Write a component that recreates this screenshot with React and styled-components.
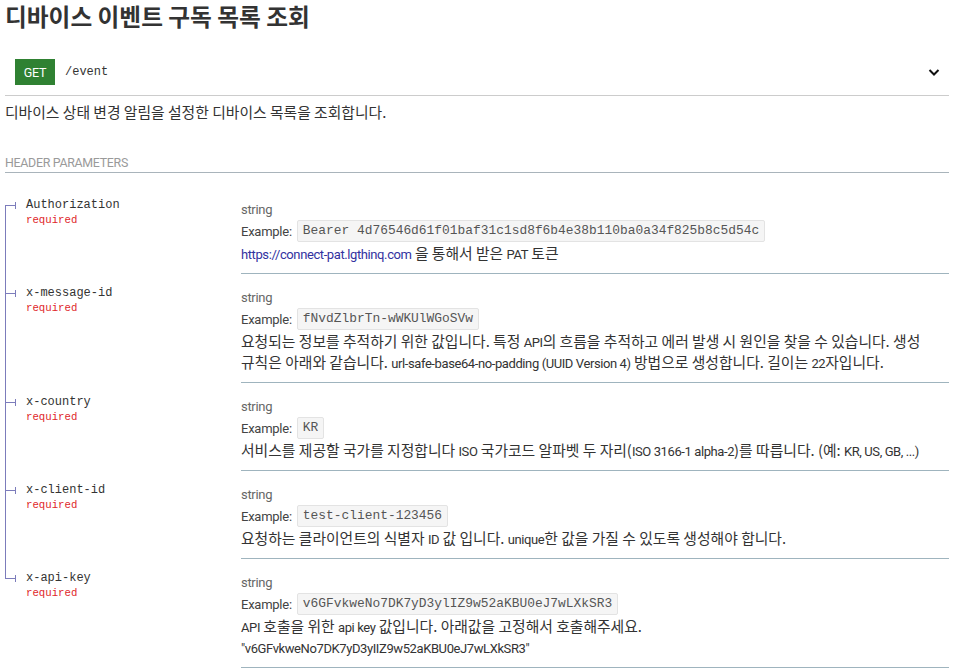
import React from "react";
import styled, { createGlobalStyle } from "styled-components";

const GlobalStyle = createGlobalStyle`
  html, body { margin: 0; padding: 0; background: #fff; }
  body {
    font-family: Roboto, "Noto Sans CJK KR", sans-serif;
    color: #333;
    -webkit-font-smoothing: antialiased;
  }
`;

const TREE = "#7c7cbb";
const HANGUL = `"Noto Sans CJK KR", Roboto, sans-serif`;

const Page = styled.div`
  padding: 0 7px 0 5px;
  width: 944px;
`;

const Title = styled.h1`
  margin: 0;
  font-family: ${HANGUL};
  font-size: 23.7px;
  line-height: 32px;
  font-weight: 700;
  color: #333;
`;

const EndpointRow = styled.div`
  margin-top: 17px;
  display: flex;
  align-items: center;
  padding: 10px 9px 10px 10px;
  border-bottom: 1px solid #cccccc;
`;

const MethodBadge = styled.span`
  width: 40px;
  height: 26px;
  display: flex;
  align-items: center;
  justify-content: center;
  background: #2f8132;
  color: #fff;
  font-family: Roboto, sans-serif;
  font-size: 12.5px;
  letter-spacing: -0.3px;
`;

const PathText = styled.span`
  margin-left: 10px;
  font-family: "Liberation Mono", monospace;
  font-size: 12px;
  color: #333;
`;

const Chevron = styled.svg`
  margin-left: auto;
  width: 12px;
  height: 12px;
`;

const Lead = styled.p`
  margin: 5px 0 0;
  font-family: ${HANGUL};
  font-size: 14.8px;
  line-height: 21px;
  color: #333;
`;

const SectionHeader = styled.h5`
  margin: 32px 0 0;
  padding-bottom: 1px;
  font-family: Roboto, sans-serif;
  font-weight: 400;
  font-size: 12.4px;
  letter-spacing: -0.3px;
  line-height: 17px;
  color: #9a9a9a;
  text-transform: uppercase;
  border-bottom: 1px solid #a9b4bb;
`;

const ParamList = styled.div`
  margin-top: 13px;
`;

const ParamRow = styled.div`
  display: grid;
  grid-template-columns: 236px 1fr;
`;

const NameCell = styled.div`
  position: relative;
  padding: 12px 10px 0 21px;

  &::before {
    content: "";
    position: absolute;
    left: 0;
    width: 1px;
    background: ${TREE};
    top: ${(p) => (p.$first ? "19px" : "0")};
    ${(p) => (p.$last ? "height: 20px;" : "bottom: 0;")}
  }

  &::after {
    content: "";
    position: absolute;
    left: 0;
    top: 16px;
    width: 10px;
    height: 7px;
    border-right: 1px solid ${TREE};
    background: linear-gradient(${TREE}, ${TREE}) center / 100% 1px no-repeat;
  }
`;

const ParamName = styled.div`
  font-family: "Liberation Mono", monospace;
  font-size: 12px;
  line-height: 15px;
  color: #333;
`;

const Required = styled.div`
  font-family: "Liberation Mono", monospace;
  font-size: 10.7px;
  line-height: 14px;
  color: #e0262b;
`;

const DetailCell = styled.div`
  padding: 14px 0 10px;
  border-bottom: 1px solid #9fb4be;
`;

const TypeLine = styled.div`
  font-family: Roboto, sans-serif;
  font-size: 13px;
  letter-spacing: -0.3px;
  line-height: 20px;
  color: #666;
`;

const ExampleLine = styled.div`
  display: flex;
  align-items: center;
  height: 22px;
  font-family: Roboto, sans-serif;
  font-size: 13px;
  letter-spacing: -0.25px;
  color: #444;
`;

const CodeBox = styled.code`
  margin-left: 5px;
  padding: 0 5px;
  line-height: 20px;
  font-family: "Liberation Mono", monospace;
  font-size: 12.9px;
  letter-spacing: 0;
  color: #555;
  background: #f5f5f5;
  border: 1px solid #e3e3e3;
  border-radius: 2px;
`;

const Desc = styled.div`
  font-family: ${HANGUL};
  font-size: 14.8px;
  line-height: 21px;
  color: #333;
  word-break: keep-all;
`;

const Latin = styled.span`
  font-family: Roboto, sans-serif;
  font-size: 13px;
  letter-spacing: -0.4px;
  line-height: 10px;
`;

const Link = styled(Latin).attrs({ as: "a" })`
  color: #32329f;
  text-decoration: none;
`;

const params = [
  {
    name: "Authorization",
    example: "Bearer 4d76546d61f01baf31c1sd8f6b4e38b110ba0a34f825b8c5d54c",
    desc: (
      <>
        <Link href="#">https://connect-pat.lgthinq.com</Link> 을 통해서 받은 <Latin>PAT</Latin> 토큰
      </>
    ),
  },
  {
    name: "x-message-id",
    example: "fNvdZlbrTn-wWKUlWGoSVw",
    desc: (
      <>
        요청되는 정보를 추적하기 위한 값입니다. 특정 <Latin>API</Latin>의 흐름을 추적하고 에러 발생 시 원인을 찾을 수
        있습니다. 생성 규칙은 아래와 같습니다.{" "}
        <Latin>url-safe-base64-no-padding (UUID Version 4)</Latin> 방법으로 생성합니다. 길이는 <Latin>22</Latin>
        자입니다.
      </>
    ),
  },
  {
    name: "x-country",
    example: "KR",
    desc: (
      <>
        서비스를 제공할 국가를 지정합니다 <Latin>ISO</Latin> 국가코드 알파벳 두 자리(<Latin>ISO 3166-1 alpha-2</Latin>
        )를 따릅니다. (예: <Latin>KR, US, GB, ...)</Latin>
      </>
    ),
  },
  {
    name: "x-client-id",
    example: "test-client-123456",
    desc: (
      <>
        요청하는 클라이언트의 식별자 <Latin>ID</Latin> 값 입니다. <Latin>unique</Latin>한 값을 가질 수 있도록
        생성해야 합니다.
      </>
    ),
  },
  {
    name: "x-api-key",
    example: "v6GFvkweNo7DK7yD3ylIZ9w52aKBU0eJ7wLXkSR3",
    desc: (
      <>
        <Latin>API</Latin> 호출을 위한 <Latin>api key</Latin> 값입니다. 아래값을 고정해서 호출해주세요.
        <br />
        <Latin>"v6GFvkweNo7DK7yD3yIIZ9w52aKBU0eJ7wLXkSR3"</Latin>
      </>
    ),
  },
];

export default function App() {
  return (
    <>
      <GlobalStyle />
      <Page>
        <Title>디바이스 이벤트 구독 목록 조회</Title>
        <EndpointRow>
          <MethodBadge>GET</MethodBadge>
          <PathText>/event</PathText>
          <Chevron viewBox="0 0 12 12" aria-hidden="true">
            <polyline points="1.5,4 6,8.5 10.5,4" fill="none" stroke="#111" strokeWidth="2" />
          </Chevron>
        </EndpointRow>
        <Lead>디바이스 상태 변경 알림을 설정한 디바이스 목록을 조회합니다.</Lead>
        <SectionHeader>Header Parameters</SectionHeader>
        <ParamList>
          {params.map((p, i) => (
            <ParamRow key={p.name}>
              <NameCell $first={i === 0} $last={i === params.length - 1}>
                <ParamName>{p.name}</ParamName>
                <Required>required</Required>
              </NameCell>
              <DetailCell>
                <TypeLine>string</TypeLine>
                <ExampleLine>
                  Example:<CodeBox>{p.example}</CodeBox>
                </ExampleLine>
                <Desc>{p.desc}</Desc>
              </DetailCell>
            </ParamRow>
          ))}
        </ParamList>
      </Page>
    </>
  );
}
